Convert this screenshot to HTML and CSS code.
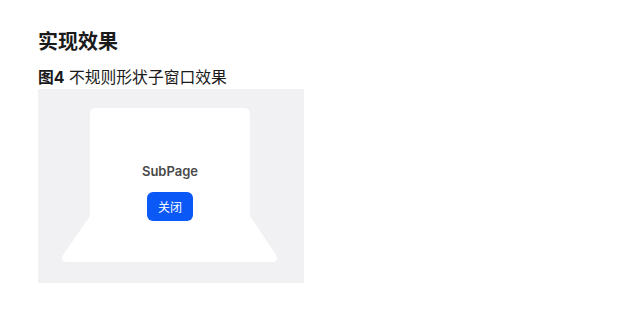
FILE: index.html
```html
<!DOCTYPE html>
<html lang="zh-CN">
<head>
  <meta charset="UTF-8">
  <meta name="viewport" content="width=device-width, initial-scale=1.0">
  <title>实现效果</title>
  <link rel="stylesheet" href="styles.css">
</head>
<body>
  <h2>实现效果</h2>
  <p class="caption"><strong>图4</strong> 不规则形状子窗口效果</p>

  <div class="figure">
    <svg class="shape" width="266" height="194" viewBox="0 0 266 194">
      <path d="M52,25 Q52,19 58,19 H206 Q212,19 212,25 V127 L238,166 Q241,173 234,173 H29 Q22,173 25,166 L52,127 Z" fill="#ffffff"/>
    </svg>
    <div class="subpage">
      <div class="subpage-title">SubPage</div>
      <button class="close-btn">关闭</button>
    </div>
  </div>
</body>
</html>
```

FILE: styles.css
```css
body {
  margin: 0;
  padding: 30px 38px 0;
  font-family: Inter, "Noto Sans CJK SC", sans-serif;
  color: #1a1a1a;
}
h2 {
  margin: 0;
  font-size: 20px;
  line-height: 24px;
  font-weight: 700;
}
.caption {
  margin: 13px 0 0;
  font-size: 15.8px;
  line-height: 21px;
}
.caption strong {
  font-weight: 700;
}
.figure {
  position: relative;
  width: 266px;
  height: 194px;
  margin-top: 1px;
  background-color: #f1f1f3;
}
.shape {
  position: absolute;
  left: 0;
  top: 0;
}
.subpage {
  position: relative;
  width: 160px;
  margin-left: 52px;
  padding-top: 74px;
  display: flex;
  flex-direction: column;
  align-items: center;
}
.subpage-title {
  font-size: 13px;
  line-height: 16px;
  font-weight: 600;
  color: #4a4a4a;
}
.close-btn {
  margin-top: 13px;
  width: 46px;
  height: 29px;
  border: none;
  border-radius: 6px;
  background-color: #0a59f7;
  color: #ffffff;
  font-family: "Noto Sans CJK SC", sans-serif;
  font-size: 12px;
  padding: 0;
}
```
